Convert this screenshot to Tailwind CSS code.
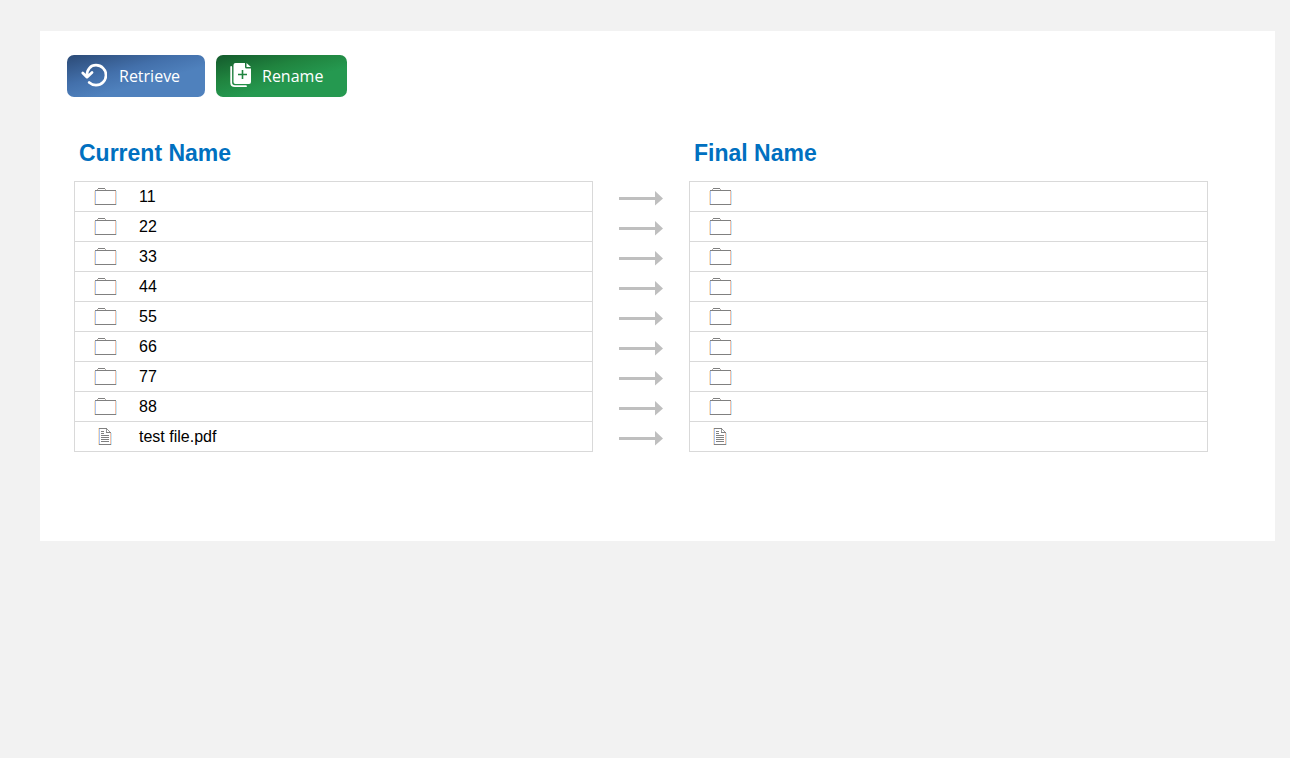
<!DOCTYPE html>
<html lang="en">
<head>
<meta charset="utf-8">
<title>File Renamer</title>
<script src="https://cdn.jsdelivr.net/npm/@tailwindcss/browser@4"></script>
</head>
<body class="min-h-screen bg-[#f2f2f2] pt-[31px] pr-[15px] pl-10 font-['Liberation_Sans',Arial,sans-serif] text-base text-black">
<svg class="hidden" aria-hidden="true">
  <symbol id="folder" viewBox="0 0 24 20">
    <g shape-rendering="crispEdges">
      <path fill="#fde2bd" d="M1 4h1v14H1z"/><path fill="#a9c3f3" d="M2 4h1v13H2z"/>
      <path fill="#f4c0a9" d="M22 4h1v13h-1z"/><path fill="#c3e8fb" d="M23 4h1v14h-1z"/>
      <path fill="#808080" d="M2 3h21v1H2zM2 17h21v1H2zM5 1h7v1H5z"/>
      <path fill="#b0aaa5" d="M4 2h1v1H4zM12 2h1v1h-1z"/>
    </g>
  </symbol>
  <symbol id="file" viewBox="0 0 24 20">
    <g shape-rendering="crispEdges">
      <path fill="#fde2bd" d="M5 1h1v17H5z"/><path fill="#a9c3f3" d="M6 2h1v15H6z"/>
      <path fill="#f4c0a9" d="M17 6h1v11h-1z"/><path fill="#c3e8fb" d="M18 6h1v12h-1z"/>
      <path fill="#808080" d="M6 1h8v1H6zM6 17h12v1H6zM13 5h5v1h-5zM8 4h3v1H8zM8 6h3v1H8zM8 8h8v1H8zM8 10h8v1H8zM8 12h8v1H8zM8 14h8v1H8z"/>
      <path fill="#999" d="M13 2h1v3h-1zM14 2h1v1h-1zM15 3h1v1h-1zM16 4h1v1h-1z"/>
    </g>
  </symbol>
  <symbol id="arrow" viewBox="0 0 44 16"><path fill="#bfbfbf" d="M0 7h36V1l8 7.500-8 7V10H0z"/></symbol>
</svg>
<main class="bg-white pt-6 pr-[67px] pb-[89px] pl-[27px]">
  <div class="flex gap-[11px] font-['Open_Sans',sans-serif] text-base text-white">
    <button type="button" class="flex h-[42px] w-[138px] items-center gap-3 rounded-[7px] bg-[linear-gradient(165deg,#2b4a76_0%,#4370ab_38%,#4f81bd_62%)] pl-[14px]">
      <svg class="size-[26px]" viewBox="0 0 26 26" fill="none" stroke="#fff" stroke-width="2.700" stroke-linecap="round" stroke-linejoin="round" aria-hidden="true"><path d="M6 13.500C5.500 6 10 2.200 15 2.200A10 10 0 0 1 15 22.200Q11 22 8.200 19.500M1.800 10L6 14.200L11 9.500"/></svg>
      <span>Retrieve</span>
    </button>
    <button type="button" class="flex h-[42px] w-[131px] items-center gap-2 rounded-[7px] bg-[linear-gradient(165deg,#145a2c_0%,#20843f_35%,#259950_62%)] pl-3">
      <svg class="size-[26px]" viewBox="0 0 26 26" aria-hidden="true"><path fill="none" stroke="#fff" stroke-width="1.800" stroke-linecap="round" d="M3.200 4v15.500q0 3.700 3.700 3.700H18"/><path fill="#fff" d="M7.500 0H17v4q0 1.500 1.500 1.500H23V19q0 2-2 2H7.500q-2 0-2-2V2q0-2 2-2zM18.500 0L23 4h-4.500z"/><path stroke="#20843f" stroke-width="1.600" d="M14.500 7v9M10 11.500h9"/></svg>
      <span>Rename</span>
    </button>
  </div>
  <div class="mt-[38px] pl-[7px]">
    <table class="w-full table-fixed border-separate border-spacing-0">
      <colgroup><col><col class="w-24"><col></colgroup>
      <thead>
        <tr class="h-[46px] text-left align-top text-[23px] leading-9 text-[#0070c0]">
          <th scope="col" class="p-0 pl-[5px]">Current Name</th><td></td><th scope="col" class="p-0 pl-[5px]">Final Name</th>
        </tr>
      </thead>
      <tbody id="rows"></tbody>
    </table>
  </div>
</main>
<template id="row">
  <tr class="group h-[30px] first:h-[31px]">
    <td class="border-x border-b border-[#d9d9d9] p-0 pt-[3px] pl-[18px] align-top group-first:border-t"><div class="flex items-center gap-[22px]"><svg class="h-5 w-6" aria-hidden="true"><use/></svg><span>&nbsp;</span></div></td>
    <td class="p-0 pb-1.5 align-bottom"><svg class="mx-auto block h-4 w-11" aria-hidden="true"><use href="#arrow"/></svg></td>
    <td class="border-x border-b border-[#d9d9d9] p-0 pt-[5px] pl-[18px] align-top group-first:border-t"><svg class="block h-5 w-6" aria-hidden="true"><use/></svg></td>
  </tr>
</template>
<script>
  const template = document.getElementById('row');
  for (const name of ['11', '22', '33', '44', '55', '66', '77', '88', 'test file.pdf']) {
    const row = template.content.cloneNode(true);
    row.querySelector('span').textContent = name;
    row.querySelectorAll('use:not([href])').forEach(u => u.setAttribute('href', name.includes('.') ? '#file' : '#folder'));
    document.getElementById('rows').append(row);
  }
</script>
</body>
</html>
